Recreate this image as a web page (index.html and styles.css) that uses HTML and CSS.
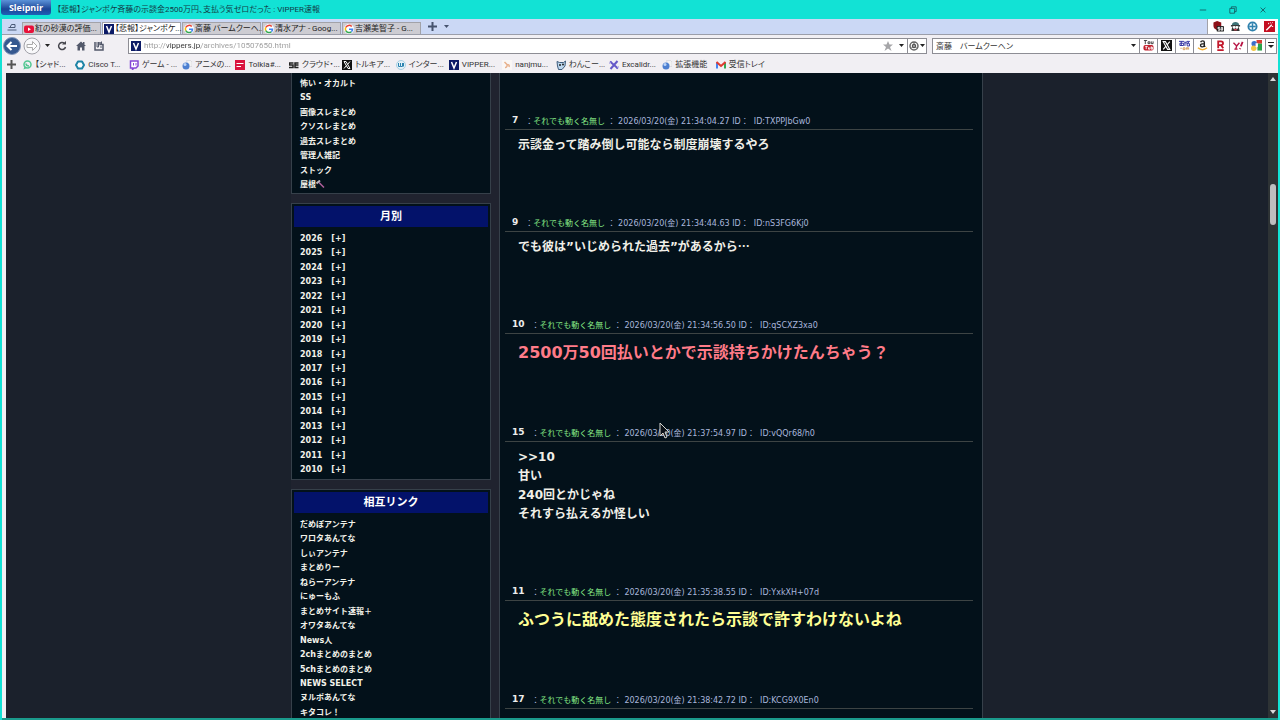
FILE: index.html
```
<!DOCTYPE html>
<html lang="ja">
<head>
  <meta charset="UTF-8">
  <meta name="viewport" content="width=device-width, initial-scale=1.0">
  <title>VIPPER速報</title>
  <link rel="stylesheet" href="styles.css">
</head>
<body>
  <svg class="defs" width="0" height="0" aria-hidden="true">
    <symbol id="google" viewBox="0 0 20 20">
      <circle cx="10" cy="10" r="10" fill="#fff"/>
      <path d="M15.5 5.2A7.3 7.3 0 0 0 3.6 6.6" fill="none" stroke="#ea4335" stroke-width="3"/>
      <path d="M3.6 6.6a7.3 7.3 0 0 0 0 6.8" fill="none" stroke="#fbbc05" stroke-width="3"/>
      <path d="M3.6 13.4a7.3 7.3 0 0 0 11 2.2" fill="none" stroke="#34a853" stroke-width="3"/>
      <path d="M14.6 15.6a7 7 0 0 0 2.4-5.1H10" fill="none" stroke="#4285f4" stroke-width="3"/>
    </symbol>
    <symbol id="vip" viewBox="0 0 20 20">
      <path d="M0 0h20v20H0z" fill="#0b1a66"/>
      <path d="M5 4l5 12 5-12" fill="none" stroke="#fff" stroke-width="3"/>
    </symbol>
    <symbol id="xlogo" viewBox="0 0 20 20">
      <path d="M0 0h20v20H0z" fill="#111"/>
      <path d="M4 3h4l8 14h-4z" fill="none" stroke="#fff" stroke-width="2"/>
      <path d="M16 3l-5 6M9 11l-5 6" stroke="#fff" stroke-width="2"/>
    </symbol>
    <symbol id="globe" viewBox="0 0 20 20">
      <path d="M9 1h8l3 3v9h-8z" fill="#f3f3f3" stroke="#c9c9cf"/>
      <circle cx="8" cy="12" r="7" fill="#4d7fd0"/>
      <circle cx="6" cy="9" r="3" fill="#b9d3f7"/>
    </symbol>
    <symbol id="caret" viewBox="0 0 10 6"><path d="M0 0h10L5 6z" fill="currentColor"/></symbol>
  </svg>

  <header class="titlebar">
    <button class="app-button" type="button">Sleipnir</button>
    <h1>【悲報】ジャンポケ斉藤の示談金2500万円、支払う気ゼロだった : VIPPER速報</h1>
    <div class="window-buttons">
      <button type="button" aria-label="最小化"><svg viewBox="0 0 10 10"><path d="M1 5h8"/></svg></button>
      <button type="button" aria-label="元に戻す"><svg viewBox="0 0 10 10"><path d="M1 3h6v6H1zM3 3V1h6v6H7"/></svg></button>
      <button type="button" aria-label="閉じる"><svg viewBox="0 0 10 10"><path d="M2 2l6 6M8 2L2 8"/></svg></button>
    </div>
  </header>

  <div class="window">
    <nav class="tabbar">
      <button class="tab-home" type="button" aria-label="タブ一覧"><svg width="10" height="8" viewBox="0 0 20 16"><path d="M1 14h18M3 9h13M6 9l3-6h7v6" fill="none" stroke="#4a5a78" stroke-width="2"/></svg></button>
      <div class="tabs">
        <button class="tab" type="button"><svg class="fav" viewBox="0 0 20 20"><rect y="3" width="20" height="15" rx="4" fill="#e8103a"/><path d="M8 7v7l6-3.500z" fill="#fff"/></svg><span>紅の砂漠の評価...</span></button>
        <button class="tab active" type="button"><svg class="fav"><use href="#vip"/></svg><span>【悲報】ジャンポケ...</span></button>
        <button class="tab" type="button"><svg class="fav"><use href="#google"/></svg><span>斎藤 バームクーヘ...</span></button>
        <button class="tab" type="button"><svg class="fav"><use href="#google"/></svg><span>清水アナ - Goog...</span></button>
        <button class="tab" type="button"><svg class="fav"><use href="#google"/></svg><span>吉瀬美智子 - G...</span></button>
      </div>
      <button class="tab-tool" type="button" aria-label="新しいタブ"><svg width="9" height="9" viewBox="0 0 9 9"><path d="M4.500 0v9M0 4.500h9" stroke="#46536e" stroke-width="2"/></svg></button>
      <button class="tab-tool" type="button" aria-label="タブメニュー"><svg width="5" height="3"><use href="#caret"/></svg></button>
      <div class="extensions">
        <button type="button" aria-label="広告ブロック"><svg viewBox="0 0 24 24"><path d="M1 3l8-3 9 3v8c0 5-5 7-9 9C4 18 1 15 1 11z" fill="#8d1018"/><rect x="8" y="11" width="16" height="12" rx="2" fill="#222"/><path d="M15 14h-4v3h4v3h-4M18 14h3v6h-3z" fill="none" stroke="#fff" stroke-width="2"/></svg></button>
        <button type="button" aria-label="ユーザースクリプト"><svg viewBox="0 0 24 24"><path d="M4 9c0-9 16-9 16 0z" fill="#3e7377"/><path d="M2 9h20v3H2z" fill="#222"/><path d="M5 12h14l2 10H3z" fill="#333"/><circle cx="9" cy="14" r="3" fill="#fff"/><circle cx="15" cy="14" r="3" fill="#fff"/><path d="M9 19h6" stroke="#d23a4c" stroke-width="3"/></svg></button>
        <button type="button" aria-label="移動"><svg viewBox="0 0 24 24"><circle cx="12" cy="12" r="9" fill="#e9f5fb" stroke="#2f81ad" stroke-width="4"/><path d="M12 5v14M5 12h14" stroke="#2f81ad" stroke-width="3"/></svg></button>
        <button type="button" aria-label="ツール"><svg viewBox="0 0 24 24"><path d="M0 0h24v24H0z" fill="#c40f22"/><path d="M5 20L17 8" stroke="#fff" stroke-width="3"/><path d="M10 4v3M19 3l-2 2M20 12h-3M14 3v2" stroke="#fff" stroke-width="2"/></svg></button>
      </div>
    </nav>

    <div class="navbar">
      <div class="nav-buttons">
        <button class="back" type="button" aria-label="戻る"><svg width="18" height="18" viewBox="0 0 36 36"><circle cx="18" cy="18" r="17" fill="#35588f" stroke="#8296ba" stroke-width="2"/><path d="M28 18H10M17 10l-8 8 8 8" fill="none" stroke="#fff" stroke-width="4"/></svg></button>
        <button class="forward" type="button" aria-label="進む"><svg width="18" height="18" viewBox="0 0 36 36"><circle cx="18" cy="18" r="16" fill="#f8f8fa" stroke="#a1a1a8" stroke-width="2"/><path d="M8 15h11V9l9 9-9 9v-6H8z" fill="#fff" stroke="#aaa" stroke-width="2"/></svg></button>
        <button class="history" type="button" aria-label="履歴"><svg width="5" height="3"><use href="#caret"/></svg></button>
        <button class="reload" type="button" aria-label="更新"><svg width="10" height="10" viewBox="0 0 20 20"><path d="M15 5a7 7 0 1 0 2 7" fill="none" stroke="#46464d" stroke-width="3"/><path d="M10 7h8V0z" fill="#46464d"/></svg></button>
        <button class="home" type="button" aria-label="ホーム"><svg width="10" height="10" viewBox="0 0 20 20"><path d="M10 1l10 9h-3v9h-5v-6H8v6H3v-9H0z" fill="#52586a"/><path d="M14 2h3v5h-3z" fill="#52586a"/></svg></button>
        <button class="save" type="button" aria-label="保存"><svg width="10" height="10" viewBox="0 0 20 20"><path d="M2 2v16h16V7h-6V2" fill="none" stroke="#52586a" stroke-width="3"/><path d="M6 2v10h3V2M12 12h4M15 1v5" fill="none" stroke="#52586a" stroke-width="2"/></svg></button>
      </div>
      <div class="address">
        <svg class="fav"><use href="#vip"/></svg>
        <input type="text" class="url" aria-label="アドレス" value="http://vippers.jp/archives/10507650.html">
        <button type="button" class="star" aria-label="お気に入り"><svg width="10" height="10" viewBox="0 0 20 20"><path d="M10 0l3 7h7l-6 5 3 8-7-5-7 5 3-8-6-5h7z" fill="#a5a5a8"/></svg></button>
        <button type="button" class="drop" aria-label="候補"><svg width="5" height="3"><use href="#caret"/></svg></button>
        <button type="button" class="engine" aria-label="エンジン"><svg width="10" height="10" viewBox="0 0 20 20"><circle cx="10" cy="10" r="8" fill="none" stroke="#666" stroke-width="3"/><circle cx="10" cy="10" r="3" fill="none" stroke="#555" stroke-width="3"/><path d="M10 2v4M4 15l3-3M16 15l-3-3" stroke="#666" stroke-width="2"/></svg><svg width="5" height="3"><use href="#caret"/></svg></button>
      </div>
      <div class="search">
        <input type="text" aria-label="検索" value="斎藤　バームクーヘン">
        <button type="button" class="drop" aria-label="検索候補"><svg width="5" height="3"><use href="#caret"/></svg></button>
        <button type="button" class="site" aria-label="YouTube"><svg viewBox="0 0 24 24"><path d="M2 1h7M5 1v8M11 4h4v4h-4zM18 3v5h4V3" fill="none" stroke="#333" stroke-width="2"/><rect x="1" y="11" width="22" height="12" rx="4" fill="#c21f2c"/><path d="M5 14h5M7 14v6M12 16v4h3v-4M18 14v6h3v-4h-3" fill="none" stroke="#fff" stroke-width="2"/></svg></button>
        <button type="button" class="site" aria-label="X"><svg><use href="#xlogo"/></svg></button>
        <button type="button" class="site" aria-label="価格.com"><svg viewBox="0 0 24 24"><path d="M0 3h11M2 7h8v5H2zM5 3v9M13 3v10M12 6h4M17 3h6l-5 5h5v5h-5z" fill="none" stroke="#2a2a9c" stroke-width="2"/><path d="M3 18h3M9 17h4v4H9zM16 21v-4h5v4M18 17v4" fill="none" stroke="#d49a55" stroke-width="2"/></svg></button>
        <button type="button" class="site" aria-label="Amazon"><svg viewBox="0 0 24 24"><path d="M8 5c1-4 8-4 8 0v8l2 2M16 8c-8 0-9 2-8 5s7 3 8-2" fill="none" stroke="#222" stroke-width="3"/><path d="M2 17c6 5 14 5 20 0" fill="none" stroke="#f2ae32" stroke-width="3"/></svg></button>
        <button type="button" class="site" aria-label="楽天"><svg viewBox="0 0 24 24"><path d="M7 18V3h6c6 0 6 8 0 8H7M13 11l5 7M5 22h14" fill="none" stroke="#c3182c" stroke-width="4"/></svg></button>
        <button type="button" class="site" aria-label="Yahoo"><svg viewBox="0 0 24 24"><path d="M1 6l7 7 6-7M8 13l-2 7M3 20h7" fill="none" stroke="#b81545" stroke-width="3"/><path d="M21 4l-4 10M16 18l-1 2" stroke="#b81545" stroke-width="4"/></svg></button>
        <button type="button" class="site" aria-label="Google"><svg viewBox="0 0 24 24"><path d="M12 0h12v8H12z" fill="#d83a32"/><path d="M14 8h10v15H14z" fill="#2aa34a"/><circle cx="7" cy="8" r="6" fill="#3b6fc9"/><circle cx="6" cy="18" r="6" fill="#f0c545"/><path d="M10 7h5v8h-5z" fill="#fff"/></svg></button>
        <button type="button" class="more" aria-label="その他"><svg width="6" height="7" viewBox="0 0 12 14"><path d="M0 1h12" stroke="#222" stroke-width="2"/><path d="M0 6h12l-6 6z" fill="#222"/></svg></button>
      </div>
    </div>

    <nav class="bookmarks">
      <button type="button" aria-label="追加"><svg width="9" height="9" viewBox="0 0 9 9"><path d="M4.500 0v9M0 4.500h9" stroke="#555" stroke-width="2"/></svg></button>
      <ul>
        <li><a href="#"><svg viewBox="0 0 20 20"><circle cx="11" cy="9" r="7" fill="none" stroke="#53c792" stroke-width="3"/><path d="M3 19l2-7 5 4z" fill="#53c792"/><path d="M8 7c0 4 3 5 6 5" fill="none" stroke="#53c792" stroke-width="3"/></svg>【シャド...</a></li>
        <li><a href="#"><svg viewBox="0 0 20 20"><path d="M6 3h8l4 7-4 7H6l-4-7z" fill="#fff" stroke="#1e84a6" stroke-width="4" stroke-linejoin="round"/></svg>Cisco T...</a></li>
        <li><a href="#"><svg viewBox="0 0 20 20"><path d="M3 2h15v10l-4 4h-4l-3 3v-3H3z" fill="#fff" stroke="#8547d6" stroke-width="3"/><path d="M9 6v5M14 6v5" stroke="#8547d6" stroke-width="2"/></svg>ゲーム - ...</a></li>
        <li><a href="#"><svg><use href="#globe"/></svg>アニメの...</a></li>
        <li><a href="#"><svg viewBox="0 0 20 20"><path d="M0 0h20v20H0z" fill="#d9133f"/><path d="M3 7h14M3 13h9" stroke="#fff" stroke-width="2"/></svg>Tolkia#...</a></li>
        <li><a href="#"><svg viewBox="0 0 20 20"><path d="M9 6H1v4h7v5H0M19 6h-7v9h7M12 10h7" fill="none" stroke="#222" stroke-width="3"/></svg>クラウド・...</a></li>
        <li><a href="#"><svg><use href="#xlogo"/></svg>トルキア...</a></li>
        <li><a href="#"><svg viewBox="0 0 20 20"><circle cx="10" cy="10" r="9" fill="#e3f1f8" stroke="#a8cfe2" stroke-width="2"/><path d="M5 6v7h4V6M9 13h4V6M15 6v7" fill="none" stroke="#2b83b0" stroke-width="2"/></svg>インター...</a></li>
        <li><a href="#"><svg><use href="#vip"/></svg>VIPPER...</a></li>
        <li><a href="#"><svg viewBox="0 0 20 20"><path d="M0 0h20v20H0z" fill="#faf7f5"/><path d="M5 4l5 5M6 15c3 0 5-3 4-6 4 0 5 2 4 5" fill="none" stroke="#e8b08b" stroke-width="3"/></svg>nanjmu...</a></li>
        <li><a href="#"><svg viewBox="0 0 20 20"><path d="M2 3l5 2h8l4-3-1 10-6 7H5l-2-7z" fill="#bcd7ef" stroke="#3f5d7d" stroke-width="2"/><circle cx="8" cy="10" r="2" fill="#222"/><circle cx="14" cy="9" r="2" fill="#222"/></svg>わんこー...</a></li>
        <li><a href="#"><svg viewBox="0 0 20 20"><path d="M2 3l16 14M17 2L3 18" stroke="#6559c8" stroke-width="4"/><path d="M1 7l5-5M14 18l5-5" stroke="#8d84dc" stroke-width="2"/></svg>Excalidr...</a></li>
        <li><a href="#"><svg><use href="#globe"/></svg>拡張機能</a></li>
        <li><a href="#"><svg viewBox="0 0 20 20"><path d="M2 17V5" stroke="#4285f4" stroke-width="4"/><path d="M18 17V5" stroke="#34a853" stroke-width="4"/><path d="M1 4l9 8 9-8" fill="none" stroke="#e03b30" stroke-width="4"/></svg>受信トレイ</a></li>
      </ul>
    </nav>

    <div class="viewport">
      <div class="blog">
        <aside class="sidebar">
          <section class="card card-rest">
            <ul class="links categories">
              <li><a href="#">怖い・オカルト</a></li>
              <li><a href="#">SS</a></li>
              <li><a href="#">画像スレまとめ</a></li>
              <li><a href="#">クソスレまとめ</a></li>
              <li><a href="#">過去スレまとめ</a></li>
              <li><a href="#">管理人雑記</a></li>
              <li><a href="#">ストック</a></li>
              <li><a href="#">屋根<svg class="hammer" width="9" height="8" viewBox="0 0 18 16"><path d="M6 5l10 10" stroke="#b0609c" stroke-width="3"/><path d="M1 7l7-6" stroke="#b9b5bd" stroke-width="4"/></svg></a></li>
            </ul>
          </section>
          <section class="card">
            <h2>月別</h2>
            <ul class="links months">
              <li><a href="#">2026</a><a href="#">[+]</a></li>
              <li><a href="#">2025</a><a href="#">[+]</a></li>
              <li><a href="#">2024</a><a href="#">[+]</a></li>
              <li><a href="#">2023</a><a href="#">[+]</a></li>
              <li><a href="#">2022</a><a href="#">[+]</a></li>
              <li><a href="#">2021</a><a href="#">[+]</a></li>
              <li><a href="#">2020</a><a href="#">[+]</a></li>
              <li><a href="#">2019</a><a href="#">[+]</a></li>
              <li><a href="#">2018</a><a href="#">[+]</a></li>
              <li><a href="#">2017</a><a href="#">[+]</a></li>
              <li><a href="#">2016</a><a href="#">[+]</a></li>
              <li><a href="#">2015</a><a href="#">[+]</a></li>
              <li><a href="#">2014</a><a href="#">[+]</a></li>
              <li><a href="#">2013</a><a href="#">[+]</a></li>
              <li><a href="#">2012</a><a href="#">[+]</a></li>
              <li><a href="#">2011</a><a href="#">[+]</a></li>
              <li><a href="#">2010</a><a href="#">[+]</a></li>
            </ul>
          </section>
          <section class="card">
            <h2>相互リンク</h2>
            <ul class="links mutual">
              <li><a href="#">だめぽアンテナ</a></li>
              <li><a href="#">ワロタあんてな</a></li>
              <li><a href="#">しぃアンテナ</a></li>
              <li><a href="#">まとめりー</a></li>
              <li><a href="#">ねらーアンテナ</a></li>
              <li><a href="#">にゅーもふ</a></li>
              <li><a href="#">まとめサイト速報＋</a></li>
              <li><a href="#">オワタあんてな</a></li>
              <li><a href="#">News人</a></li>
              <li><a href="#">2chまとめのまとめ</a></li>
              <li><a href="#">5chまとめのまとめ</a></li>
              <li><a href="#">NEWS SELECT</a></li>
              <li><a href="#">ヌルポあんてな</a></li>
              <li><a href="#">キタコレ！</a></li>
            </ul>
          </section>
        </aside>

        <main class="thread">
          <article class="post">
            <header><b>7</b><span>：<em>それでも動く名無し</em> ： 2026/03/20(金) 21:34:04.27 ID：&nbsp; ID:TXPPJbGw0</span></header>
            <p>示談金って踏み倒し可能なら制度崩壊するやろ</p>
          </article>
          <article class="post">
            <header><b>9</b><span>：<em>それでも動く名無し</em> ： 2026/03/20(金) 21:34:44.63 ID：&nbsp; ID:nS3FG6Kj0</span></header>
            <p>でも彼は”いじめられた過去”があるから<span class="dots">…</span></p>
          </article>
          <article class="post">
            <header><b>10</b><span>：<em>それでも動く名無し</em> ： 2026/03/20(金) 21:34:56.50 ID：&nbsp; ID:qSCXZ3xa0</span></header>
            <p class="big red">2500万50回払いとかで示談持ちかけたんちゃう？</p>
          </article>
          <article class="post">
            <header><b>15</b><span>：<em>それでも動く名無し</em> ： 2026/03/20(金) 21:37:54.97 ID：&nbsp; ID:vQQr68/h0</span></header>
            <p>&gt;&gt;10<br>甘い<br>240回とかじゃね<br>それすら払えるか怪しい</p>
          </article>
          <article class="post">
            <header><b>11</b><span>：<em>それでも動く名無し</em> ： 2026/03/20(金) 21:35:38.55 ID：&nbsp; ID:YxkXH+07d</span></header>
            <p class="big yellow">ふつうに舐めた態度されたら示談で許すわけないよね</p>
          </article>
          <article class="post">
            <header><b>17</b><span>：<em>それでも動く名無し</em> ： 2026/03/20(金) 21:38:42.72 ID：&nbsp; ID:KCG9X0En0</span></header>
          </article>
        </main>
      </div>

      <div class="scrollbar">
        <svg width="6" height="4" viewBox="0 0 6 4"><path d="M3 0l3 4H0z" fill="#d8d8da"/></svg>
        <div class="track"><div class="thumb"></div></div>
        <svg width="6" height="4" viewBox="0 0 6 4"><path d="M0 0h6L3 4z" fill="#d8d8da"/></svg>
      </div>
    </div>
  </div>

  <svg class="cursor" width="11" height="17" viewBox="0 0 11 17"><path d="M1 1v13l3-3 2 5 2-1-2-5h4z" fill="#0b1117" stroke="#d6d6d0"/></svg>
</body>
</html>
```
FILE: styles.css
```
* {
  box-sizing: border-box;
}
body {
  display: flex;
  flex-direction: column;
  height: 100vh;
  margin: 0;
  overflow: hidden;
  background-color: #12e2d5;
  font-family: Roboto, "Noto Sans CJK JP", sans-serif;
  font-size: 8px;
  color: #333;
}
button {
  display: flex;
  align-items: center;
  justify-content: center;
  padding: 0;
  border: none;
  background: none;
  font: inherit;
  color: #222;
  cursor: pointer;
}
input {
  min-width: 0;
  padding: 0;
  border: none;
  outline: none;
  background: none;
  font: inherit;
  color: #333;
}
ul {
  margin: 0;
  padding: 0;
  list-style: none;
}
a {
  color: inherit;
  text-decoration: none;
}
.defs {
  position: absolute;
}
.fav {
  flex: none;
  width: 10px;
  height: 10px;
}

/* title bar */
.titlebar {
  display: flex;
  align-items: center;
  flex: none;
  height: 19px;
  padding-left: 1px;
}
.app-button {
  align-self: flex-start;
  width: 50px;
  height: 15px;
  border-radius: 0 0 3px 3px;
  background: linear-gradient(#5b92d8, #1c4596 60%, #1d61b8);
  font-family: "Open Sans", sans-serif;
  font-size: 9px;
  font-weight: bold;
  color: #fff;
}
.titlebar h1 {
  flex: 1;
  margin: 0 0 0 6px;
  font-size: 8px;
  line-height: 16px;
  font-weight: normal;
  font-feature-settings: "palt";
  color: #123c48;
}
.window-buttons {
  display: flex;
  padding-right: 2px;
}
.window-buttons button {
  width: 30px;
  height: 16px;
}
.window-buttons svg {
  width: 8px;
  height: 8px;
  fill: none;
  stroke: #15505a;
}

/* browser frame */
.window {
  display: flex;
  flex: 1;
  flex-direction: column;
  min-height: 0;
  margin: 0 2px;
  border-bottom: 2px solid #1a9a8c;
  background-color: #f1eff3;
}
.tabbar {
  display: flex;
  flex: none;
  height: 16px;
  background-color: #cbd8f5;
  border-bottom: 1px solid #9b9eaa;
}
.tab-home {
  width: 20px;
}
.tabs {
  display: flex;
  gap: 1px;
}
.tab {
  justify-content: flex-start;
  gap: 1px;
  width: 79px;
  margin-top: 3px;
  padding-left: 1px;
  border: 1px solid #a2a2a8;
  border-bottom: none;
  background-color: #cdccd2;
  line-height: 12px;
  white-space: nowrap;
  font-feature-settings: "palt";
}
.tab.active {
  background-color: #fff;
}
.tab-tool {
  width: 14px;
  margin-left: 4px;
}
.tab-tool + .tab-tool {
  margin-left: 0;
  color: #46536e;
}
.extensions {
  display: flex;
  align-items: center;
  gap: 6px;
  margin-left: auto;
  padding: 0 3px 0 5px;
  border-left: 1px solid #a2a2a8;
  background-color: #fff;
}
.extensions svg {
  width: 11px;
  height: 11px;
}
.navbar {
  display: flex;
  align-items: center;
  gap: 5px;
  flex: none;
  height: 21px;
}
.nav-buttons {
  display: flex;
  align-items: center;
  width: 121px;
}
.nav-buttons .back,
.nav-buttons .forward {
  width: 20px;
}
.history {
  width: 10px;
}
.reload {
  width: 20px;
}
.home,
.save {
  width: 18px;
}
.address,
.search {
  display: flex;
  align-items: center;
  height: 16px;
  border: 1px solid #8d8d94;
  background-color: #fff;
}
.address {
  flex: 1;
}
.address .fav {
  margin: 0 3px 0 2px;
}
/* host name stands out from the rest of the address */
.url {
  flex: 1;
  color: #999;
  background-image: linear-gradient(to right, #999 23px, #333 23px, #333 57px, #999 57px);
  -webkit-background-clip: text;
  background-clip: text;
  -webkit-text-fill-color: transparent;
}
.star {
  width: 14px;
}
.drop {
  width: 12px;
}
.engine {
  gap: 1px;
  width: 19px;
  height: 14px;
  border-left: 1px solid #8d8d94;
}
.search {
  width: 345px;
  margin-right: 1px;
}
.search input {
  flex: 1;
  padding-left: 3px;
  font-feature-settings: "palt";
}
.site {
  width: 18px;
  height: 14px;
  border-left: 1px solid #8d8d94;
}
.site svg {
  width: 11px;
  height: 11px;
}
.more {
  width: 11px;
  height: 14px;
  border-left: 1px solid #8d8d94;
}
.bookmarks {
  display: flex;
  align-items: center;
  flex: none;
  height: 17px;
}
.bookmarks button {
  width: 18px;
}
.bookmarks ul {
  display: grid;
  grid-template-columns: repeat(14, 1fr);
  width: 747px;
  margin-left: 2px;
}
.bookmarks a {
  display: flex;
  align-items: center;
  gap: 3px;
  line-height: 12px;
  white-space: nowrap;
  font-feature-settings: "palt";
}
.bookmarks svg {
  flex: none;
  width: 10px;
  height: 10px;
}
.bookmarks button svg {
  width: 9px;
  height: 9px;
}

/* page */
.viewport {
  display: flex;
  flex: 1;
  min-height: 0;
  margin-left: 4px;
  background-color: #1b212c;
  font-family: "DejaVu Sans", "Noto Sans CJK JP", sans-serif;
  overflow: hidden;
}
.blog {
  display: flex;
  gap: 8px;
  width: 692px;
  margin: 0 auto;
  background-color: #20232f;
}
.sidebar {
  flex: none;
  width: 200px;
}
.card {
  margin-bottom: 9px;
  padding: 2px;
  border: 1px solid #36404a;
  background-color: #03111a;
}
.card-rest {
  padding: 4px 2px 1px;
  border-top: none;
}
.card h2 {
  margin: 0 0 5px;
  background-color: #03126a;
  text-align: center;
  font-size: 11px;
  line-height: 21px;
  color: #fff;
}
.links {
  display: flex;
  flex-direction: column;
  justify-content: space-between;
  padding-left: 6px;
  font-weight: bold;
  line-height: 14px;
  color: #f2f2ea;
}
.links li {
  height: 14px;
}
.categories {
  min-height: 115px;
}
.months {
  min-height: 245px;
}
.months a {
  margin-right: 9px;
}
.mutual {
  min-height: 202px;
}
.hammer {
  vertical-align: middle;
}
.thread {
  flex: 1;
  padding: 38px 9px 0 5px;
  border: 1px solid #36404a;
  border-width: 0 1px;
  background-color: #03111a;
}
.post {
  padding-bottom: 58px;
}
.post header {
  display: flex;
  align-items: center;
  gap: 2px;
  height: 19px;
  padding-left: 7px;
  border-bottom: 1px solid #3d4444;
  color: #a9b6dc;
}
.post b {
  margin-right: 5px;
  font-size: 9px;
  color: #eee;
}
.post em {
  font-style: normal;
  color: #86e986;
}
.post p {
  margin: 0;
  padding: 6px 0 0 13px;
  font-size: 12px;
  line-height: 19px;
  font-weight: bold;
  color: #f0efe8;
}
.post .big {
  font-size: 16px;
  line-height: 25px;
}
.post .red {
  color: #ff7b88;
}
.post .yellow {
  color: #ffff94;
}
.dots {
  font-family: "Noto Sans CJK JP", sans-serif;
  line-height: 12px;
}

.scrollbar {
  display: flex;
  flex: none;
  flex-direction: column;
  align-items: center;
  width: 10px;
  padding: 4px 0;
  background-color: #2e3335;
}
.track {
  flex: 1;
  padding-top: 103px;
}
.thumb {
  width: 6px;
  height: 41px;
  border-radius: 3px;
  background-color: #bdbdbf;
}
.cursor {
  position: absolute;
  left: 659px;
  top: 422px;
}
```
